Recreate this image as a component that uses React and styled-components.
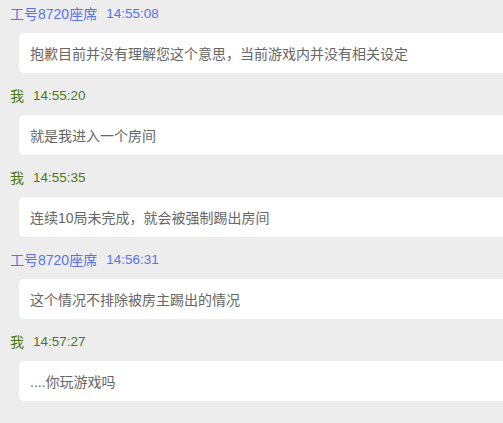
import React from "react";
import styled, { createGlobalStyle } from "styled-components";

const GlobalStyle = createGlobalStyle`
  html, body {
    margin: 0;
    padding: 0;
    background: #ededed;
    overflow: hidden;
  }
  body {
    font-family: "Liberation Sans", "Noto Sans CJK SC", sans-serif;
  }
`;

const List = styled.div`
  display: flex;
  flex-direction: column;
  padding: 3px 0 0 0;
  width: 100%;
`;

const Item = styled.div`
  display: flex;
  flex-direction: column;
  margin-bottom: 12px;
`;

const Header = styled.div`
  display: flex;
  align-items: center;
  height: 20px;
  padding-left: 10px;
  font-size: 14px;
  color: ${(p) => (p.$mine ? "#4b7813" : "#5a72e6")};
`;

const Time = styled.span`
  margin-left: 9px;
  font-size: 13.5px;
`;

const Bubble = styled.div`
  margin: 10px -20px 0 19px;
  height: 40px;
  display: flex;
  align-items: center;
  padding-left: 11px;
  background: #ffffff;
  border-radius: 5px;
  font-size: 14px;
  color: #666666;
`;

const messages = [
  { mine: false, who: "工号8720座席", time: "14:55:08", text: "抱歉目前并没有理解您这个意思，当前游戏内并没有相关设定" },
  { mine: true, who: "我", time: "14:55:20", text: "就是我进入一个房间" },
  { mine: true, who: "我", time: "14:55:35", text: "连续10局未完成，就会被强制踢出房间" },
  { mine: false, who: "工号8720座席", time: "14:56:31", text: "这个情况不排除被房主踢出的情况" },
  { mine: true, who: "我", time: "14:57:27", text: "....你玩游戏吗" },
];

const App = () => {
  return (
    <>
      <GlobalStyle />
      <List>
        {messages.map((m, i) => (
          <Item key={i}>
            <Header $mine={m.mine}>
              {m.who}
              <Time>{m.time}</Time>
            </Header>
            <Bubble>{m.text}</Bubble>
          </Item>
        ))}
      </List>
    </>
  );
};

export default App;
